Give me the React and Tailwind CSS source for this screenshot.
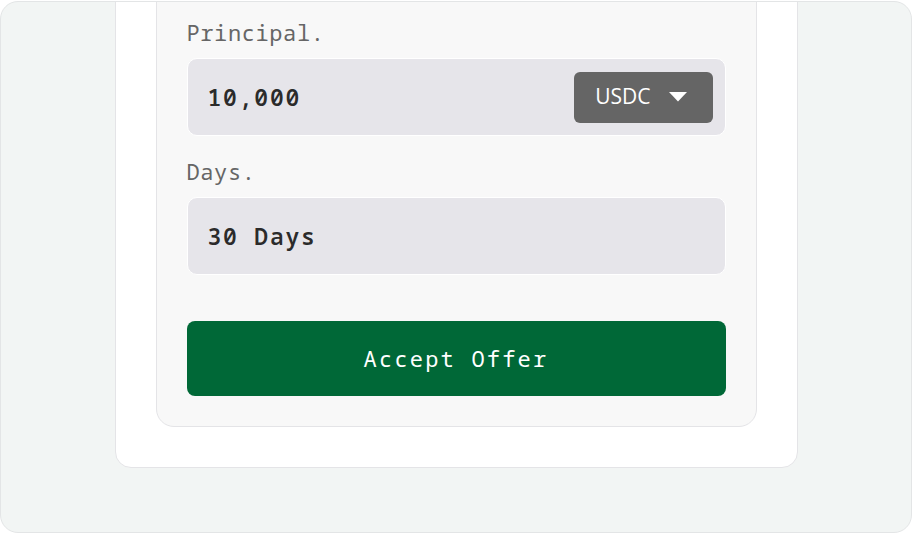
export default function App() {
  return (
    <div className="w-[912px] h-[533px] bg-white pt-px font-['Noto_Sans_Mono','DejaVu_Sans_Mono',monospace]">
      <div className="h-[532px] overflow-hidden rounded-[18px] border border-[#e3e5e6] bg-[#f2f5f4] flex flex-col justify-end items-center pb-[64px]">
        <div className="w-[683px] shrink-0 rounded-[16px] border border-[#e4e4e7] bg-white p-[40px]">
          <div className="rounded-[18px] border border-[#e4e4e7] bg-[#f8f8f8] px-[30px] pt-[80px] pb-[30px]">
            <div className="flex flex-col gap-[23px]">
              <div>
                <div className="text-[22px] leading-[24px] tracking-[0.6px] text-[#666666] mb-[14px]">Principal.</div>
                <div className="h-[78px] rounded-[10px] border border-white bg-[#e6e5ea] flex items-center justify-between pl-[20px] pr-[12px]">
                  <span className="text-[23px] font-semibold tracking-[1.8px] text-[#2b2b2b]">10,000</span>
                  <button className="h-[51px] rounded-[6px] bg-[#656565] flex items-center gap-[18px] pl-[21px] pr-[26px] text-white font-['Open_Sans',sans-serif] text-[21px]">
                    USDC
                    <svg width="18" height="10" viewBox="0 0 18 10">
                      <path d="M0 0 H18 L9 9.5 Z" fill="#ffffff" />
                    </svg>
                  </button>
                </div>
              </div>
              <div>
                <div className="text-[22px] leading-[24px] tracking-[0.6px] text-[#666666] mb-[14px]">Days.</div>
                <div className="h-[78px] rounded-[10px] border border-white bg-[#e6e5ea] flex items-center pl-[20px]">
                  <span className="text-[23px] font-semibold tracking-[1.8px] text-[#2b2b2b]">30 Days</span>
                </div>
              </div>
            </div>
            <button className="mt-[46px] w-full h-[75px] rounded-[8px] bg-[#006837] text-white text-[22px] tracking-[2.2px] flex items-center justify-center">
              Accept Offer
            </button>
          </div>
        </div>
      </div>
    </div>
  );
}
